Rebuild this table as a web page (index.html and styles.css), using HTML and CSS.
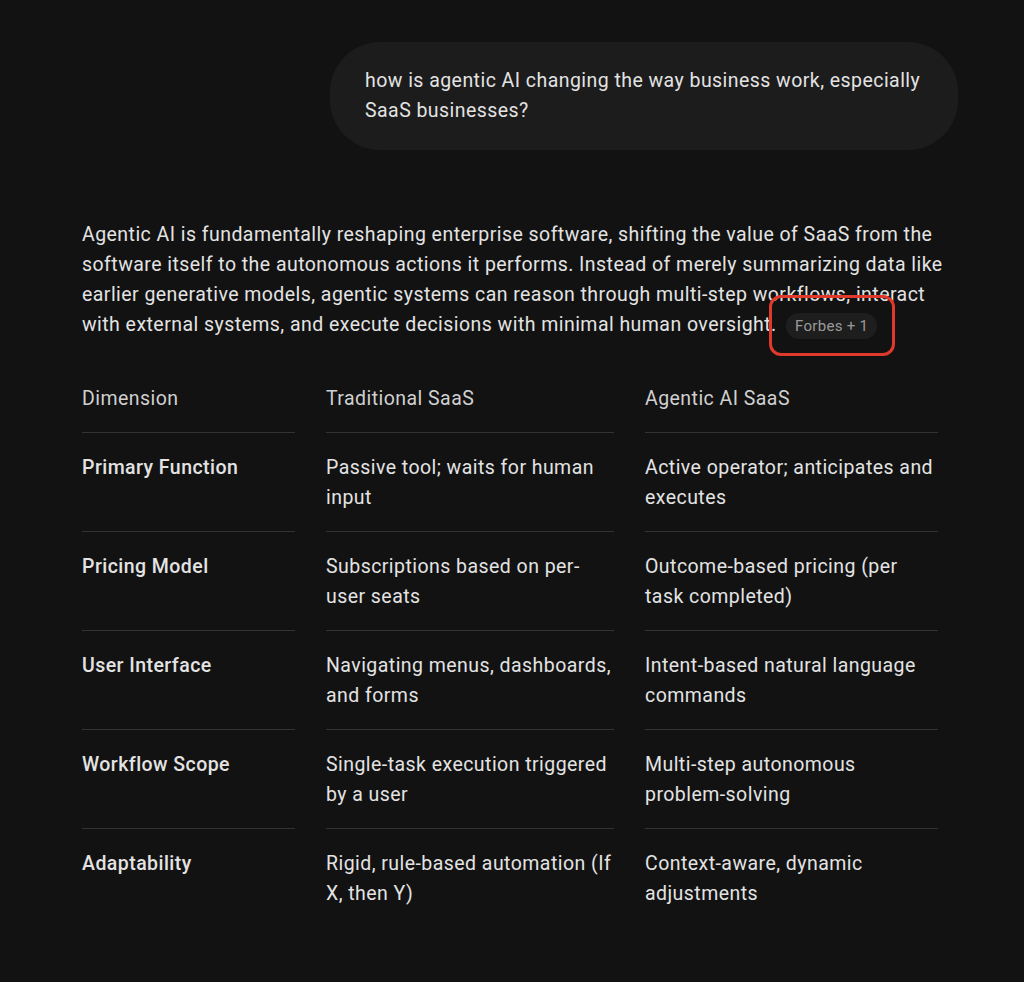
FILE: index.html
```html
<!DOCTYPE html>
<html lang="en">
<head>
<meta charset="utf-8">
<title>Agentic AI and SaaS</title>
<link rel="stylesheet" href="styles.css">
</head>
<body>
<main class="chat">
  <div class="user-row">
    <div class="bubble">how is agentic AI changing the way business work, especially SaaS businesses?</div>
  </div>
  <section class="answer">
    <p class="lead">Agentic AI is fundamentally reshaping enterprise software, shifting the value of SaaS from the software itself to the autonomous actions it performs. Instead of merely summarizing data like earlier generative models, agentic systems can reason through multi-step workflows, interact with external systems, and execute decisions with minimal human oversight. <span class="cite-wrap"><span class="chip">Forbes + 1</span><span class="highlight"></span></span></p>
    <div class="table">
      <div class="cell head">Dimension</div>
      <div class="cell head">Traditional SaaS</div>
      <div class="cell head">Agentic AI SaaS</div>

      <div class="cell dim">Primary Function</div>
      <div class="cell">Passive tool; waits for human input</div>
      <div class="cell">Active operator; anticipates and executes</div>

      <div class="cell dim">Pricing Model</div>
      <div class="cell">Subscriptions based on per-user seats</div>
      <div class="cell">Outcome-based pricing (per task completed)</div>

      <div class="cell dim">User Interface</div>
      <div class="cell">Navigating menus, dashboards, and forms</div>
      <div class="cell">Intent-based natural language commands</div>

      <div class="cell dim">Workflow Scope</div>
      <div class="cell">Single-task execution triggered by a user</div>
      <div class="cell">Multi-step autonomous problem-solving</div>

      <div class="cell dim last">Adaptability</div>
      <div class="cell last">Rigid, rule-based automation (If X, then Y)</div>
      <div class="cell last">Context-aware, dynamic adjustments</div>
    </div>
  </section>
</main>
</body>
</html>
```

FILE: styles.css
```css
html, body {
  margin: 0;
  padding: 0;
  background: #121212;
}
body {
  font-family: Roboto, "Noto Sans", "Liberation Sans", sans-serif;
  color: #e3e3e3;
  font-size: 19.5px;
  letter-spacing: 0.45px;
  line-height: 30px;
}
.chat {
  width: 896px;
  margin: 0 0 0 62px;
  padding-top: 42px;
}
.user-row {
  display: flex;
  justify-content: flex-end;
}
.bubble {
  background: #1c1c1c;
  border-radius: 50px;
  padding: 24px 35px;
  width: 558px;
  color: #e3e3e3;
}
.answer {
  padding: 0 0 0 20px;
  margin-top: 70px;
}
.lead {
  margin: 0;
}
.cite-wrap {
  position: relative;
  display: inline-block;
  margin-left: 4px;
}
.chip {
  display: inline-block;
  background: #1e1e1e;
  color: #9a9a9a;
  font-size: 15px;
  letter-spacing: 0.3px;
  line-height: 26px;
  padding: 0 9px;
  border-radius: 13px;
  vertical-align: 0;
}
.highlight {
  position: absolute;
  left: -17px;
  top: -15px;
  right: -18px;
  bottom: -16px;
  border: 3px solid #df392c;
  border-radius: 12px;
}
.table {
  display: grid;
  grid-template-columns: 213px 288px 293px;
  column-gap: 31px;
  margin-top: 24px;
}
.cell {
  padding: 20px 0 18px;
  border-bottom: 1px solid #333333;
}
.cell.head {
  color: #d0d0d0;
}
.cell.dim {
  font-weight: 500;
}
.cell.last {
  border-bottom: none;
}
```
